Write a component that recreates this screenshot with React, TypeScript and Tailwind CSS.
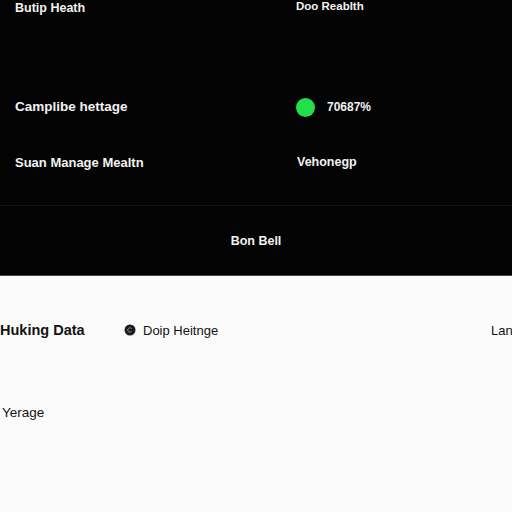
export default function App() {
  const font = { fontFamily: '"Liberation Sans", Arial, sans-serif' };
  return (
    <div className="w-[512px] h-[512px] overflow-hidden bg-[#fbfbfb]" style={font}>
      <div className="bg-[#030303] h-[276px] text-[#f2f2f2] border-b border-[#4a4a4a]">
        <div className="px-[15px]">
          <div className="grid grid-cols-[281px_1fr] h-[16px] items-center">
            <span className="text-[12.5px] font-semibold leading-none">Butip Heath</span>
            <span className="text-[11.5px] font-semibold leading-none -mt-[3px]">Doo Reablth</span>
          </div>
          <div className="grid grid-cols-[281px_1fr] h-[20px] items-center mt-[81px]">
            <span className="text-[13.5px] font-semibold leading-none">Camplibe hettage</span>
            <div className="flex items-center gap-[12px]">
              <span className="w-[19px] h-[19px] rounded-full bg-[#22e04a]" />
              <span className="text-[12px] font-semibold leading-none">70687%</span>
            </div>
          </div>
          <div className="grid grid-cols-[281px_1fr] h-[20px] items-center mt-[35px]">
            <span className="text-[13px] font-semibold leading-none">Suan Manage Mealtn</span>
            <span className="text-[12.5px] font-semibold leading-none pl-[1px]">Vehonegp</span>
          </div>
        </div>
        <div className="mt-[33px] border-b border-[#161616]" />
        <div className="h-[70px] flex items-center justify-center">
          <span className="text-[12.5px] font-semibold leading-none">Bon Bell</span>
        </div>
      </div>
      <div className="text-[#121212]">
        <div className="grid grid-cols-[124px_367px_1fr] h-[20px] items-center mt-[44px] whitespace-nowrap">
          <span className="text-[14.5px] font-bold leading-none">Huking Data</span>
          <div className="flex items-center gap-[7px]">
            <svg width="12" height="12" viewBox="0 0 12 12">
              <circle cx="6" cy="6" r="5.5" fill="#1c1c1c" />
              <path d="M7.6 4.6 A2.2 2.2 0 1 0 7.6 7.4" stroke="#8a8a8a" strokeWidth="1" fill="none" />
            </svg>
            <span className="text-[13px] font-medium leading-none">Doip Heitnge</span>
          </div>
          <span className="text-[13px] font-medium leading-none">Lan</span>
        </div>
        <div className="mt-[65px] pl-[2px] h-[16px] flex items-center">
          <span className="text-[13.5px] font-medium leading-none">Yerage</span>
        </div>
      </div>
    </div>
  );
}
